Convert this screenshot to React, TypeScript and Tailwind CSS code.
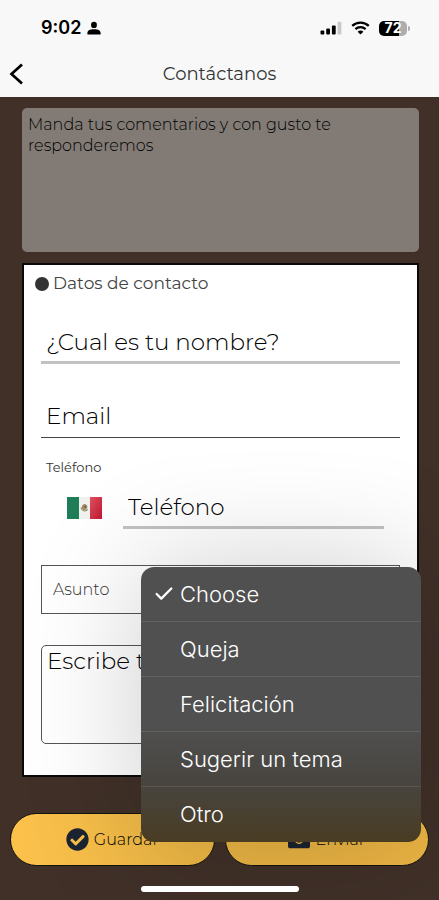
import { Check } from "lucide-react";
import { FaCheckCircle, FaEnvelope } from "react-icons/fa";

const options = ["Choose", "Queja", "Felicitación", "Sugerir un tema", "Otro"];

function StatusBar() {
  return (
    <div className="flex h-14 items-center justify-between pl-[41px] pr-[29px] text-black">
      <div className="flex items-center gap-[6px]">
        <span className="font-[Inter,sans-serif] text-lg font-semibold">9:02</span>
        <svg className="h-[14px] w-[14px]" viewBox="0 0 14 14" fill="currentColor">
          <ellipse cx="7" cy="3.9" rx="2.9" ry="3.2" />
          <path d="M0.4 13.4V12C0.4 9.6 2.4 8.2 7 8.2S13.6 9.6 13.6 12v1.4z" />
        </svg>
      </div>
      <div className="flex items-center gap-[9px]">
        <svg className="h-[14px] w-[22px]" viewBox="0 0 22 14" fill="currentColor">
          <rect x="0.5" y="9.5" width="3.8" height="4" rx="1" />
          <rect x="6.2" y="7.4" width="3.8" height="6.1" rx="1" />
          <rect x="11.9" y="4.4" width="3.8" height="9.1" rx="1" />
          <rect x="17.6" y="0.8" width="3.8" height="12.7" rx="1" fill="#c9c9c9" />
        </svg>
        <svg className="h-[14px] w-[19px]" viewBox="0 0 19 14" fill="none" stroke="currentColor" strokeWidth="2.3">
          <path d="M1.2 4.9C5.9 0.5 13.1 0.5 17.8 4.9" />
          <path d="M4.4 8.2C7.3 5.5 11.7 5.5 14.6 8.2" />
          <path d="M9.5 13.6 6.6 10.7c1.6-1.5 4.2-1.5 5.8 0z" fill="currentColor" stroke="none" />
        </svg>
        <div className="flex items-center gap-px">
          <div className="flex h-[15px] w-7 items-center justify-center rounded-[5px] bg-linear-to-r from-black from-72% to-[#adadad] to-72% font-[Inter,sans-serif] text-sm font-bold text-white">
            72
          </div>
          <div className="h-[5px] w-[2px] rounded-r-full bg-[#adadad]" />
        </div>
      </div>
    </div>
  );
}

function MexicoFlag() {
  return (
    <svg className="h-[22px] w-[35px] shrink-0" viewBox="0 0 35 22" role="img" aria-label="México">
      <defs>
        <linearGradient id="flag-red" x1="0" y1="0" x2="1" y2="1">
          <stop offset="0" stopColor="#dd5060" />
          <stop offset="1" stopColor="#c01830" />
        </linearGradient>
      </defs>
      <rect width="12" height="22" fill="#1f7d57" />
      <rect x="12" width="11" height="22" fill="#f1f1ef" />
      <rect x="23" width="12" height="22" fill="url(#flag-red)" />
      <path d="M14.2 10.6a3.5 3.5 0 0 0 6.5 1.6" fill="none" stroke="#7d9463" strokeWidth="1.1" />
      <path d="M14.6 10.4c.4-2.5 2-3.8 3.9-3.1 1.9.6 2.3 2.5 1.5 4.1-.9 1.7-3.2 2.5-4.4 1.2z" fill="#a78d6c" />
      <path d="M16.3 9.7l2.6-1.2.4 2.6z" fill="#75583d" />
    </svg>
  );
}

function SubjectMenu() {
  return (
    <ul
      role="listbox"
      aria-label="Asunto"
      className="absolute -right-[22px] left-[99px] top-px z-10 overflow-hidden rounded-[13px] bg-linear-to-b from-[#505050] from-58% via-[#484540] via-78% to-[#493c23] font-[Inter,sans-serif] text-[22px] font-light text-white shadow-[0_0_120px_rgba(0,0,0,0.2)]"
    >
      {options.map((option, i) => (
        <li
          key={option}
          role="option"
          aria-selected={i === 0}
          className="flex h-[55px] items-center border-b border-white/10 pl-3 last:border-b-0"
        >
          <span className="w-[27px]">{i === 0 && <Check className="size-[22px]" strokeWidth={2.5} />}</span>
          {option}
        </li>
      ))}
    </ul>
  );
}

export default function App() {
  return (
    <div className="flex min-h-screen flex-col bg-[#403028] font-[Montserrat,Inter,sans-serif] text-[#333]">
      <header className="bg-[#f8f8f8] pb-[11px]">
        <StatusBar />
        <div className="grid h-[30px] grid-cols-[40px_1fr_40px] items-center pt-1">
          <button type="button" aria-label="Atrás" className="pl-[9px] text-black">
            <svg className="h-[22px] w-[15px]" viewBox="0 0 15 22" fill="none" stroke="currentColor" strokeWidth="2.7">
              <path d="M13 1.5 2.5 11 13 20.5" />
            </svg>
          </button>
          <h1 className="text-center text-lg">Contáctanos</h1>
        </div>
      </header>

      <form className="flex flex-1 flex-col pt-[11px]">
        <div className="flex flex-col gap-[11px] pl-[22px] pr-5">
          <textarea
            disabled
            aria-label="Comentarios"
            defaultValue="Manda tus comentarios y con gusto te responderemos"
            className="h-36 w-full resize-none rounded-[5px] bg-[#827b75] px-[6px] py-[6px] text-base font-light leading-[21px] text-black"
          />

          <section className="border-2 border-[#0c0a08] bg-white px-[17px] pb-[31px] pt-[7px]">
            <h2 className="flex h-6 items-center gap-1 text-[17px] text-[#444]">
              <span className="-ml-[6px] size-[14px] rounded-full bg-[#333]" />
              Datos de contacto
            </h2>

            <input
              type="text"
              aria-label="Nombre"
              placeholder="¿Cual es tu nombre?"
              className="mt-[26px] block h-[42px] w-full border-b-3 border-[#c2c2c2] px-[5px] text-[23px] font-light placeholder:text-black"
            />
            <input
              type="email"
              aria-label="Email"
              placeholder="Email"
              className="mt-[30px] block h-11 w-full border-b border-[#444] px-[5px] text-[23px] font-light placeholder:text-black"
            />

            <label htmlFor="telefono" className="mt-[19px] block h-5 px-[5px] text-[13px] leading-5">
              Teléfono
            </label>
            <div className="mt-[10px] flex items-center gap-[21px] pl-[26px] pr-4">
              <MexicoFlag />
              <input
                id="telefono"
                type="tel"
                placeholder="Teléfono"
                className="h-[42px] min-w-0 flex-1 border-b-3 border-[#c2c2c2] px-[5px] text-[23px] font-light placeholder:text-black"
              />
            </div>

            <div className="relative mt-9 flex h-[49px] items-center border border-[#555] pl-[11px]">
              <label htmlFor="asunto" className="w-[87px] text-base font-light">
                Asunto
              </label>
              <select id="asunto" className="h-full flex-1">
                {options.map((option) => (
                  <option key={option}>{option}</option>
                ))}
              </select>
              <SubjectMenu />
            </div>

            <textarea
              aria-label="Mensaje"
              placeholder="Escribe tu mensaje"
              className="mt-[31px] block h-[99px] w-full resize-none rounded-[5px] border border-[#555] px-[5px] text-[23px] font-light leading-[30px] placeholder:text-black"
            />
          </section>
        </div>

        <div className="mt-9 grid grid-cols-2 gap-[10px] px-[10px]">
          <button
            type="button"
            className="flex h-[53px] items-center justify-center gap-[5px] rounded-full border border-[#15130f] bg-linear-to-r from-[#fbc14b] to-[#edb745] text-base font-light text-black"
          >
            <FaCheckCircle className="size-[23px] text-[#1b2430]" />
            Guardar
          </button>
          <button
            type="submit"
            className="flex h-[53px] items-center justify-center gap-[5px] rounded-full border border-[#15130f] bg-[#ecb544] text-base font-light text-black"
          >
            <FaEnvelope className="size-[22px] text-[#1b2430]" />
            Enviar
          </button>
        </div>

        <div className="z-20 mx-auto mb-2 mt-5 h-[6px] w-[158px] rounded-full bg-white" />
      </form>
    </div>
  );
}
